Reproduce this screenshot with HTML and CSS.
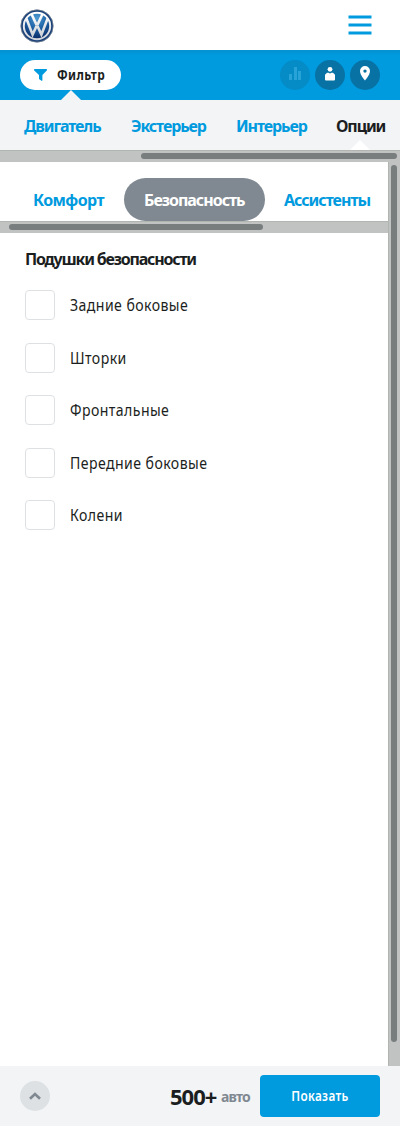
FILE: index.html
```html
<!DOCTYPE html>
<html lang="ru">
<head>
<meta charset="utf-8">
<title>Фильтр</title>
<link rel="stylesheet" href="styles.css">
</head>
<body>
<header class="header">
  <svg class="logo" width="34" height="34" viewBox="0 0 34 34">
    <defs>
      <radialGradient id="blue" cx=".5" cy=".2" r=".8"><stop offset="0" stop-color="#4c9bd3"/><stop offset=".5" stop-color="#1c60a4"/><stop offset="1" stop-color="#0a2862"/></radialGradient>
      <linearGradient id="chrome" x1="0" y1="0" x2="0" y2="1"><stop offset="0" stop-color="#fff"/><stop offset="1" stop-color="#d0d4d9"/></linearGradient>
    </defs>
    <circle cx="17" cy="17" r="16.2" fill="#173f79" stroke="#7a8491" stroke-width=".8"/>
    <circle cx="17" cy="17" r="13.2" fill="url(#blue)" stroke="url(#chrome)" stroke-width="2"/>
    <path d="M11.6 5.3l4.5 9.6h1.8l4.5-9.6M6.4 9.5l6.2 16.1 3.6-7.9h1.6l3.6 7.9 6.2-16.1" fill="none" stroke="url(#chrome)" stroke-width="2.6"/>
  </svg>
  <svg class="menu" width="24" height="20" viewBox="0 0 24 20"><path d="M.5 2h23M.5 10h23M.5 18h23" stroke="#009ade" stroke-width="3"/></svg>
</header>
<div class="toolbar">
  <div class="filter">
    <svg width="13" height="12" viewBox="0 0 13 12"><path d="M.7 0h11.6c.8 0 .9.9.5 1.4L8.4 6v5.2c0 .6-.5.8-1 .5L5 10V6L.2 1.4C-.2.9 0 0 .7 0z" fill="#009ade"/></svg>
    <span>Фильтр</span>
  </div>
  <div class="actions">
    <span class="action muted"><svg width="30" height="30" viewBox="0 0 30 30"><path d="M9 14h3v6H9zM14 7h3v13h-3zM18 11h3v9h-3z" fill="#27a3d8"/></svg></span>
    <span class="action"><svg width="30" height="30" viewBox="0 0 30 30" fill="#fff"><circle cx="15" cy="9.3" r="2.4"/><path d="M12 12.7h1.5l1.5.7 1.5-.7H18l2 2v4.8q0 1-1 1h-8q-1 0-1-1v-4.8z"/></svg></span>
    <span class="action"><svg width="30" height="30" viewBox="0 0 30 30"><path d="M15 6a5 5 0 0 1 5 5c0 4-5 9.5-5 9.5S10 15 10 11a5 5 0 0 1 5-5zm0 3.4a1.7 1.7 0 1 0 0 3.4 1.7 1.7 0 0 0 0-3.4z" fill="#fff" fill-rule="evenodd"/></svg></span>
  </div>
</div>
<nav class="tabs">
  <span class="tab engine">Двигатель</span><span class="tab exterior">Экстерьер</span><span class="tab interior">Интерьер</span><span class="tab current">Опции</span>
</nav>
<div class="hbar"><div class="thumb wide"></div></div>
<div class="body">
  <main class="content">
    <nav class="subtabs"><span class="subtab comfort">Комфорт</span><span class="subtab selected">Безопасность</span><span class="subtab assist">Ассистенты</span></nav>
    <div class="hbar"><div class="thumb short"></div></div>
    <section class="group">
      <h2 class="title">Подушки безопасности</h2>
      <label class="option"><i class="box"></i><span class="name">Задние боковые</span></label>
      <label class="option"><i class="box"></i><span class="name">Шторки</span></label>
      <label class="option"><i class="box"></i><span class="name">Фронтальные</span></label>
      <label class="option"><i class="box"></i><span class="name">Передние боковые</span></label>
      <label class="option"><i class="box"></i><span class="name">Колени</span></label>
    </section>
  </main>
  <div class="vbar"><div class="vthumb"></div></div>
</div>
<footer class="footer">
  <span class="up"><svg width="12" height="8" viewBox="0 0 12 8"><path d="M1 6.7L6 2l5 4.7" fill="none" stroke="#808991" stroke-width="2.7"/></svg></span>
  <span class="count">500+</span><span class="unit">авто</span>
  <button class="show"><span class="show-text">Показать</span></button>
</footer>
</body>
</html>
```
FILE: styles.css
```css
* { box-sizing: border-box; }
body { margin: 0; width: 400px; height: 1126px; display: flex; flex-direction: column; overflow: hidden; background: #fff; color: #1b1e21; font-family: "Noto Sans", sans-serif; white-space: nowrap; }
.header { height: 50px; display: flex; justify-content: space-between; padding: 9px 28px 0 20px; flex: none; }
.logo { display: block; }
.menu { margin-top: 6px; }
.toolbar { height: 50px; flex: none; display: flex; justify-content: space-between; padding: 10px 20px; background: linear-gradient(#0591d0, #009ade 5px); }
.filter { position: relative; width: 101px; height: 30px; border-radius: 15px; background: #fff; display: flex; align-items: center; padding-left: 14px; font-size: 13.5px; font-weight: 700; }
.filter span { margin-left: 10px; letter-spacing: .4px; transform: scaleX(.88); transform-origin: left; }
.filter::after { content: ""; position: absolute; left: 41px; top: 30px; border: 10px solid transparent; border-top: 0; border-bottom-color: #f3f4f6; }
.actions { display: flex; gap: 5px; }
.action { width: 30px; height: 30px; border-radius: 50%; background: #0872a4; }
.action.muted { background: #058bc6; }
.tabs { height: 50px; flex: none; display: flex; background: #f3f4f6; padding-left: 24px; font-size: 16px; line-height: 52px; font-weight: 700; letter-spacing: -1.1px; color: #009ade; }
.tab { flex: none; }
.engine { width: 107px; }
.exterior { width: 105px; }
.interior { width: 100px; }
.current { position: relative; width: 48px; color: #1b1e21; }
.current::after { content: ""; position: absolute; left: 14px; bottom: 0; border: 10px solid transparent; border-top: 0; border-bottom-color: #fff; }
.hbar { height: 12px; flex: none; background: #c1c3c2; border-top: 1px solid #b1b5b0; padding-top: 2px; }
.thumb { height: 6px; border-radius: 3px; background: #787d7d; }
.wide { width: 256px; margin-left: 141px; }
.short { width: 254px; margin-left: 9px; }
.body { height: 904px; flex: none; display: flex; }
.content { width: 388px; }
.vbar { width: 12px; background: #c1c3c2; border-left: 1px solid #b1b5b0; padding: 3px 3px 0 2px; }
.vthumb { width: 6px; height: 877px; border-radius: 3px; background: #787d7d; }
.subtabs { height: 59px; padding: 16px 0 0 33px; display: flex; color: #009ade; font-size: 16px; line-height: 44px; font-weight: 700; letter-spacing: -1px; }
.comfort { width: 91px; letter-spacing: -.6px; }
.selected { width: 141px; height: 43px; margin-right: 19px; padding-left: 20px; border-radius: 22px; color: #fff; background: #808991; }
.group { padding: 13px 25px; }
.title { margin: 0 0 17px; font-size: 16px; line-height: 27px; font-weight: 700; letter-spacing: -1.2px; }
.option { display: flex; align-items: center; height: 30px; margin-bottom: 22.5px; font-size: 16px; letter-spacing: .5px; }
.name { transform: scaleX(.88); transform-origin: left; }
.box { width: 30px; height: 30px; border: 1px solid #dee1e4; border-radius: 4px; margin-right: 15px; }
.footer { height: 60px; flex: none; display: flex; align-items: center; background: #f3f4f6; padding: 0 20px; }
.up { width: 30px; height: 30px; border-radius: 50%; background: #dde1e4; display: flex; align-items: center; justify-content: center; }
.count { width: 51px; margin-left: 120px; margin-top: -1px; font-size: 22px; font-weight: 700; letter-spacing: -1px; }
.unit { width: 39px; font-size: 14px; font-weight: 700; letter-spacing: -.8px; color: #808991; }
.show { width: 120px; height: 42px; border: 0; padding: 0; border-radius: 4px; background: #009ade; color: #fff; font: 600 13.5px "Noto Sans", sans-serif; }
.show-text { display: inline-block; letter-spacing: .4px; transform: scaleX(.87); }
```
